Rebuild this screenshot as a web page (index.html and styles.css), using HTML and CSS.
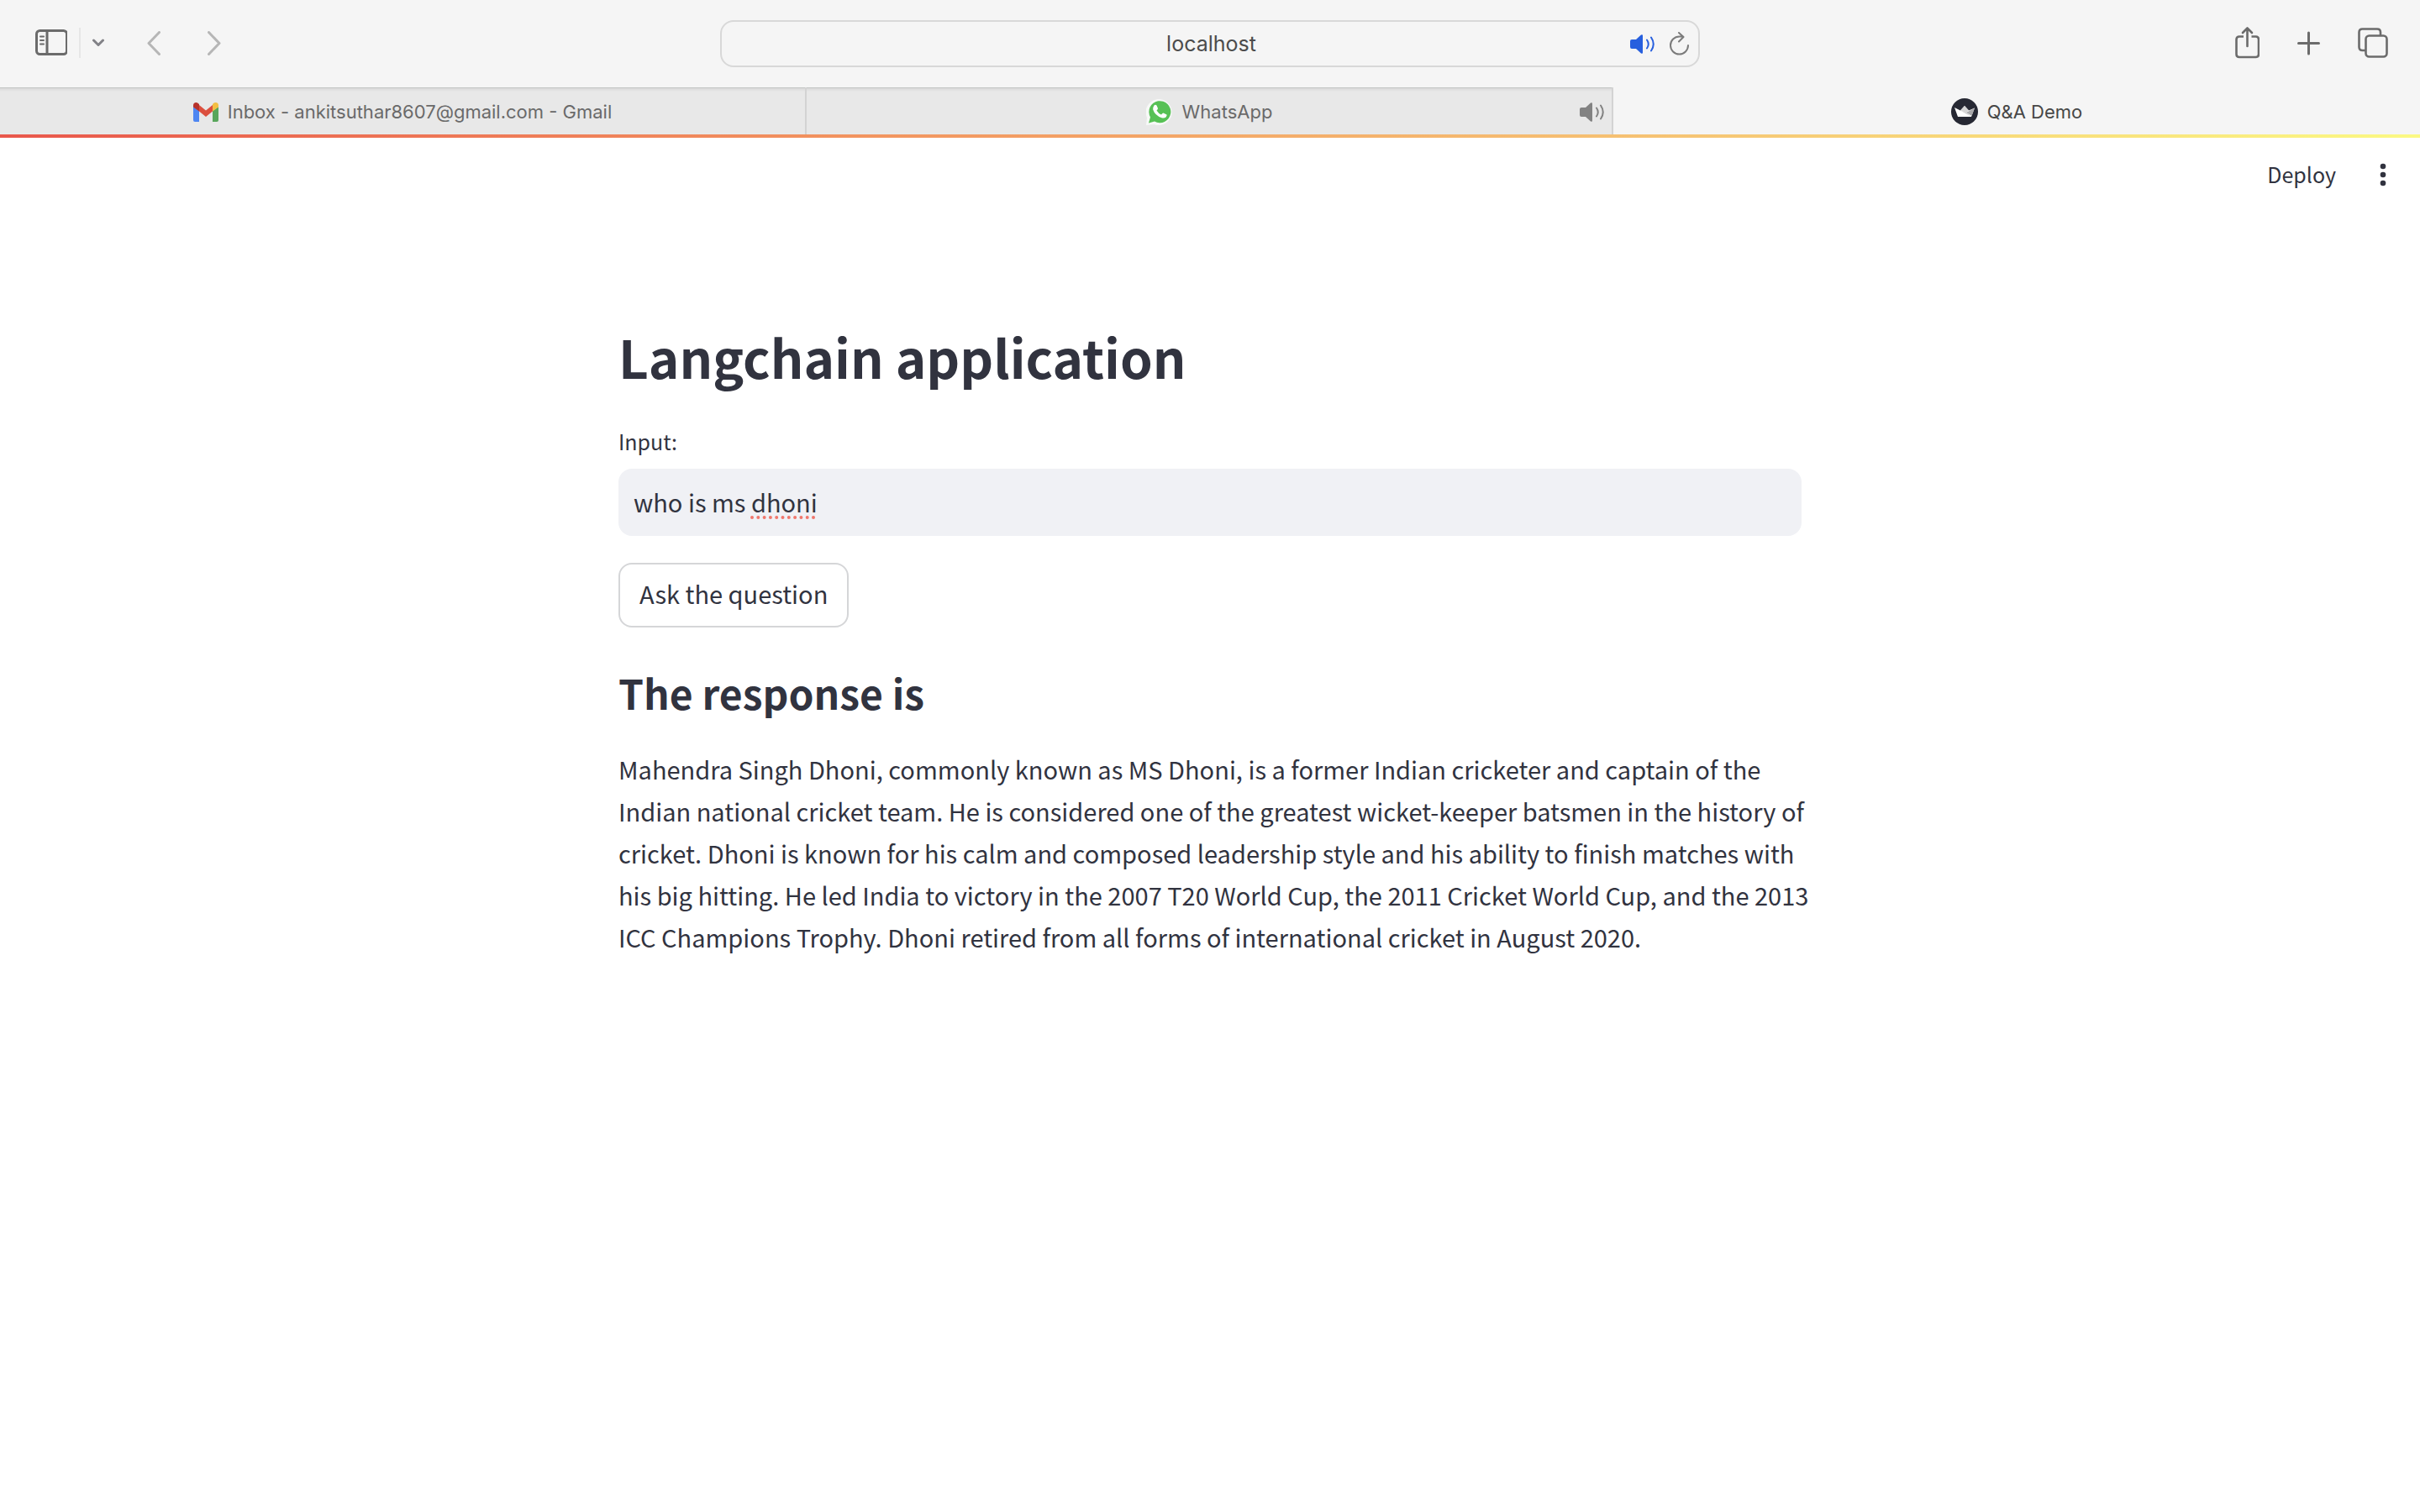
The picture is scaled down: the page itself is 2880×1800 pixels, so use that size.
FILE: index.html
```html
<!DOCTYPE html>
<html lang="en">
<head>
<meta charset="utf-8">
<title>Q&amp;A Demo</title>
<link rel="stylesheet" href="styles.css">
</head>
<body>
<header class="browser">
  <div class="toolbar">
    <div class="tools tools-left">
      <button class="icon-btn" aria-label="Show sidebar">
        <svg width="38" height="32" viewBox="0 0 38 32" fill="none" stroke="#6b6b6b" stroke-width="3" stroke-linecap="round"><rect x="1.5" y="1.5" width="36" height="28" rx="4"/><path d="M14 2v27"/><path stroke-width="2" d="M6 8.500h4M6 13h4M6 17.500h4"/></svg>
      </button>
      <span class="divider"></span>
      <button class="icon-btn" aria-label="Tab groups">
        <svg width="14" height="10" viewBox="0 0 14 10" fill="none" stroke="#828287" stroke-width="3" stroke-linecap="round" stroke-linejoin="round"><path d="M1.500 2 7 7.500 12.500 2"/></svg>
      </button>
      <button class="icon-btn back" aria-label="Back">
        <svg width="16" height="29" viewBox="0 0 16 29" fill="none" stroke="#b6b6b6" stroke-width="3" stroke-linecap="round" stroke-linejoin="round"><path d="M14.500 1.500 2 14.500 14.500 27.500"/></svg>
      </button>
      <button class="icon-btn forward" aria-label="Forward">
        <svg width="16" height="29" viewBox="0 0 16 29" fill="none" stroke="#b6b6b6" stroke-width="3" stroke-linecap="round" stroke-linejoin="round"><path d="M1.500 1.500 14 14.500 1.500 27.500"/></svg>
      </button>
    </div>
    <div class="address">
      <input class="address-input" type="text" value="localhost" aria-label="Address">
      <button class="icon-btn" aria-label="Mute">
        <svg class="speaker blue" width="29" height="23" viewBox="0 0 29 23"><path fill="currentColor" d="M2 6h5l6-5.500q2-1 2 1v20q0 2-2 1L7 17H2q-2 0-2-2V8q0-2 2-2z"/><path fill="none" stroke="currentColor" stroke-width="2" stroke-linecap="round" d="M20 6.500q3.500 5 0 10M25 3.500q5.500 8 0 16"/></svg>
      </button>
      <button class="icon-btn" aria-label="Reload">
        <svg width="23" height="28" viewBox="0 0 23 28" fill="none" stroke="#7b7b7b" stroke-width="2" stroke-linecap="round" stroke-linejoin="round"><path d="M22 16A10.500 10.500 0 1 1 11.500 5.500H16M11 1l5.500 5L11 11.500"/></svg>
      </button>
    </div>
    <div class="tools tools-right">
      <button class="icon-btn" aria-label="Share">
        <svg width="29" height="40" viewBox="0 0 29 40" fill="none" stroke="#6b6b6b" stroke-width="2.600" stroke-linecap="round" stroke-linejoin="round"><path stroke-linecap="butt" d="M10 12.500H5q-3.500 0-3.500 3.500v17.500Q1.500 37 5 37h19.500q3.500 0 3.500-3.500V16q0-3.500-3.500-3.500h-5"/><path d="M14.500 24V2.500M9 8l5.500-5.500L20 8"/></svg>
      </button>
      <button class="icon-btn" aria-label="New tab">
        <svg width="27" height="29" viewBox="0 0 27 29" fill="none" stroke="#6b6b6b" stroke-width="3" stroke-linecap="round"><path d="M13.500 2v25M1.500 14.500h24"/></svg>
      </button>
      <button class="icon-btn" aria-label="Tab overview">
        <svg width="36" height="36" viewBox="0 0 36 36" fill="none" stroke="#6b6b6b" stroke-width="2.600" stroke-linejoin="round"><rect x="9.500" y="9.500" width="25" height="25" rx="4"/><path d="M9 27H5.500q-4 0-4-4V5.500q0-4 4-4H23q4 0 4 4V9"/></svg>
      </button>
    </div>
  </div>
  <nav class="tabs">
    <div class="tab">
      <a class="tab-link" href="#gmail">
        <svg width="30" height="23" viewBox="0 0 30 23"><path fill="#4e86f2" d="M0 5l7 5v13H2q-2 0-2-2z"/><path fill="#58a65b" d="M30 5l-7 5v13h5q2 0 2-2z"/><path fill="#db4f3e" d="M7 3l8 6.500L23 3v7.500l-8 6.500-8-6.500z"/><path fill="#b6322b" d="M0 3.500Q0 0 3.500 0 5 0 7 2v8.500L0 5.500z"/><path fill="#f3bf43" d="M30 3.500Q30 0 26.500 0 25 0 23 2v8.500l7-5z"/></svg>
        <span>Inbox - ankitsuthar8607@gmail.com - Gmail</span>
      </a>
    </div>
    <div class="tab">
      <a class="tab-link" href="#whatsapp">
        <svg width="32" height="32" viewBox="0 0 32 32"><path fill="#f7f9f7" d="M0 32l1-9A15.500 15.500 0 1 1 9.500 31z"/><path fill="#57c155" d="M3 29.500l2-7A13 13 0 1 1 10 27.500z"/><path fill="#fff" d="M9.500 8.500q1.500-1.500 3 0l1.500 3.500q0 1-1.500 2.500 2 3.500 5.500 5 1.500-2 2.500-2l4 2q.500 1-1 3-2 1.700-5 .8Q10.500 20.500 8.200 13.500 8 10.500 9.500 8.500z"/></svg>
        <span>WhatsApp</span>
      </a>
      <button class="icon-btn tab-audio" aria-label="Mute tab">
        <svg class="speaker" width="29" height="23" viewBox="0 0 29 23"><path fill="currentColor" d="M2 6h5l6-5.500q2-1 2 1v20q0 2-2 1L7 17H2q-2 0-2-2V8q0-2 2-2z"/><path fill="none" stroke="currentColor" stroke-width="2" stroke-linecap="round" d="M20 6.500q3.500 5 0 10M25 3.500q5.500 8 0 16"/></svg>
      </button>
    </div>
    <div class="tab active">
      <a class="tab-link" href="#demo" aria-current="page">
        <svg width="32" height="32" viewBox="0 0 32 32"><circle cx="16" cy="16" r="16" fill="#262833"/><path fill="#fff" d="M4 11l7 3.500L16 9l5 5.500L28 11.500 24 22H8z"/><path fill="#d5d5d5" d="M11 14.500L16 9l5 5.500-3 2.500z"/><path fill="#a9a9ab" d="M28 11.500L18 17l6.500 4z"/><path fill="#cfcfd0" d="M11 14.500l7 2.500 6 5z"/></svg>
        <span>Q&amp;A Demo</span>
      </a>
    </div>
  </nav>
</header>
<div class="app">
  <div class="app-bar">
    <button class="deploy">Deploy</button>
    <button class="icon-btn" aria-label="Main menu">
      <svg width="8" height="28" viewBox="0 0 8 28" fill="#31333f"><circle cx="4" cy="4" r="3.300"/><circle cx="4" cy="14" r="3.300"/><circle cx="4" cy="24" r="3.300"/></svg>
    </button>
  </div>
  <main class="content">
    <h1 class="title">Langchain application</h1>
    <label class="field-label" for="question">Input:</label>
    <div class="field">
      <input class="field-input" id="question" type="text" value="who is ms dhoni" spellcheck="false">
      <svg class="misspelling" width="80" height="4" viewBox="0 0 80 4"><path d="M2 2h76" stroke="#f0776c" stroke-width="4" stroke-linecap="round" stroke-dasharray="0 7.300"/></svg>
    </div>
    <button class="ask">Ask the question</button>
    <h2 class="subtitle">The response is</h2>
    <p class="answer">Mahendra Singh Dhoni, commonly known as MS Dhoni, is a former Indian cricketer and captain of the Indian national cricket team. He is considered one of the greatest wicket-keeper batsmen in the history of cricket. Dhoni is known for his calm and composed leadership style and his ability to finish matches with his big hitting. He led India to victory in the 2007 T20 World Cup, the 2011 Cricket World Cup, and the 2013 ICC Champions Trophy. Dhoni retired from all forms of international cricket in August 2020.</p>
  </main>
</div>
</body>
</html>
```
FILE: styles.css
```css
* {
  box-sizing: border-box;
}

body {
  margin: 0;
  background: #fff;
  color: #31333f;
  font-family: "Noto Sans CJK SC", "Noto Sans", sans-serif;
}

button,
input {
  margin: 0;
  padding: 0;
  border: 0;
  background: none;
  color: inherit;
  font: inherit;
}

svg {
  display: block;
}

.icon-btn {
  flex: none;
}

/* Browser chrome */
.browser {
  background: #f5f5f5;
  font-family: Inter, "Liberation Sans", sans-serif;
}

.toolbar {
  display: grid;
  grid-template-columns: 1fr minmax(0, 1166px) 1fr;
  align-items: center;
  height: 104px;
}

.tools {
  display: flex;
  align-items: center;
  padding-bottom: 2px;
}

.tools-left {
  gap: 14px;
  padding-left: 42px;
}

.tools-right {
  justify-content: flex-end;
  gap: 45px;
  padding-right: 38px;
}

.divider {
  width: 2px;
  height: 36px;
  background: #e6e6e6;
}

.back {
  margin-left: 37px;
}

.forward {
  margin-left: 42px;
}

.address {
  display: flex;
  align-items: center;
  gap: 18px;
  height: 56px;
  padding: 0 11px 0 102px;
  border: 2px solid #d8d8d8;
  border-radius: 16px;
}

.address-input {
  flex: 1;
  min-width: 0;
  color: #4c4c4c;
  font-size: 25px;
  text-align: center;
}

.speaker {
  color: #828282;
}

.blue {
  color: #275fde;
}

.tabs {
  display: grid;
  grid-template-columns: repeat(3, 1fr);
}

.tab {
  position: relative;
  display: flex;
  align-items: center;
  justify-content: center;
  height: 56px;
  padding-top: 2px;
  border-right: 2px solid #d3d3d3;
  background: linear-gradient(#c3c5c4 1px, #d8d8d8 1px, #e8e8e8 5px);
}

.tab.active {
  border-right: 0;
  background: none;
}

.tab-link {
  display: flex;
  align-items: center;
  gap: 11px;
  color: #6a6a6a;
  font-size: 22px;
  line-height: 28px;
  text-decoration: none;
}

.active .tab-link {
  color: #474747;
}

.tab-audio {
  position: absolute;
  right: 9px;
}

/* App page */
.app {
  border-top: 4px solid;
  border-image: linear-gradient(90deg, #e9574b, #f2935f 35%, #f6c574 70%, #fbf983) 1;
}

.app-bar {
  display: flex;
  align-items: center;
  justify-content: flex-end;
  gap: 52px;
  height: 88px;
  padding-right: 40px;
}

.deploy {
  padding-bottom: 2px;
  font-size: 25px;
  line-height: 34px;
}

.content {
  display: flex;
  flex-direction: column;
  max-width: 1408px;
  margin: 0 auto;
  padding: 134px 0 96px;
}

.title {
  margin: 0 0 46px;
  font-size: 62px;
  font-weight: 700;
  line-height: 76px;
}

.field-label {
  margin-bottom: 16px;
  font-size: 25px;
  line-height: 34px;
}

.field {
  position: relative;
  margin-bottom: 32px;
}

.field-input {
  display: block;
  width: 100%;
  height: 80px;
  padding: 0 18px 2px;
  border-radius: 16px;
  background: #f0f1f5;
  font-size: 29px;
}

/* Spelling mark below the last word */
.misspelling {
  position: absolute;
  top: 56px;
  left: 157px;
}

.ask {
  align-self: flex-start;
  height: 77px;
  margin-bottom: 47px;
  padding: 0 23px 6px;
  border: 2px solid #d5d6d8;
  border-radius: 16px;
  font-size: 29px;
}

.subtitle {
  margin: 0 0 36px;
  font-size: 48px;
  font-weight: 700;
  line-height: 60px;
}

/* Long lines may run slightly past the field's right edge */
.answer {
  margin: 0 -16px 0 0;
  font-size: 29px;
  line-height: 50px;
}
```
